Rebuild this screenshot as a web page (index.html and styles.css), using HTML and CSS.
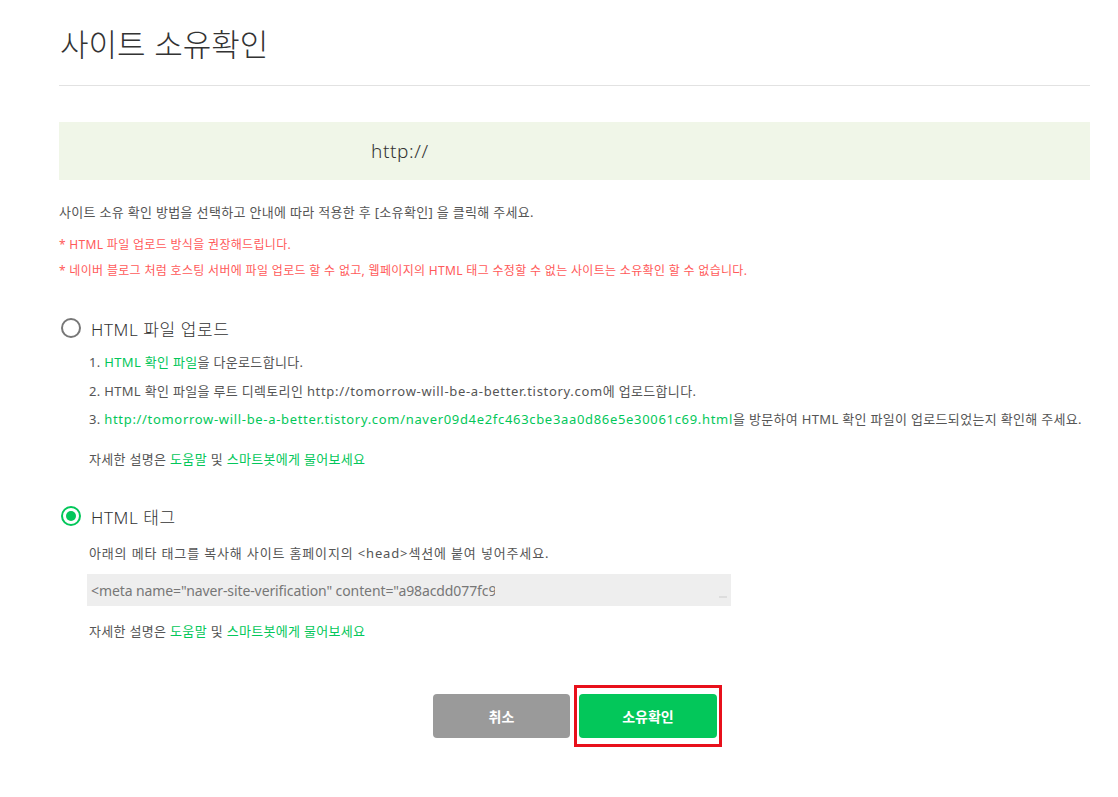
FILE: index.html
```html
<!DOCTYPE html>
<html lang="ko">
<head>
<meta charset="utf-8">
<link rel="stylesheet" href="styles.css">
</head>
<body>
<div class="page">
  <h1 class="title">사이트 소유확인</h1>
  <div class="url-box"><span class="url">http://</span></div>
  <p class="desc">사이트 소유 확인 방법을 선택하고 안내에 따라 적용한 후 [소유확인] 을 클릭해 주세요.</p>
  <p class="warn">* HTML 파일 업로드 방식을 권장해드립니다.</p>
  <p class="warn warn2">* 네이버 블로그 처럼 호스팅 서버에 파일 업로드 할 수 없고, 웹페이지의 HTML 태그 수정할 수 없는 사이트는 소유확인 할 수 없습니다.</p>

  <section class="method">
    <div class="option"><span class="radio"></span><span class="opt-label">HTML 파일 업로드</span></div>
    <div class="body">
      <p class="step">1. <span class="g">HTML 확인 파일</span>을 다운로드합니다.</p>
      <p class="step">2. HTML 확인 파일을 루트 디렉토리인 <span class="en">http://tomorrow-will-be-a-better.tistory.com</span>에 업로드합니다.</p>
      <p class="step">3. <span class="g en">http://tomorrow-will-be-a-better.tistory.com/naver09d4e2fc463cbe3aa0d86e5e30061c69.html</span>을 방문하여 HTML 확인 파일이 업로드되었는지 확인해 주세요.</p>
      <p class="help">자세한 설명은 <span class="g">도움말</span> 및 <span class="g">스마트봇에게 물어보세요</span></p>
    </div>
  </section>

  <section class="method method2">
    <div class="option"><span class="radio on"></span><span class="opt-label">HTML 태그</span></div>
    <div class="body body2">
      <p class="step wide">아래의 메타 태그를 복사해 사이트 홈페이지의 &lt;head&gt;섹션에 붙여 넣어주세요.</p>
      <div class="code"><span class="code-text">&lt;meta name="naver-site-verification" content="a98acdd077fc9</span><span class="grip"></span></div>
      <p class="help help2">자세한 설명은 <span class="g">도움말</span> 및 <span class="g">스마트봇에게 물어보세요</span></p>
    </div>
  </section>

  <div class="actions">
    <button class="btn cancel">취소</button>
    <div class="highlight"><button class="btn ok">소유확인</button></div>
  </div>
</div>
</body>
</html>
```

FILE: styles.css
```css
html, body {
  margin: 0;
  padding: 0;
  background: #fff;
}
body {
  font-family: "Noto Sans", "Noto Sans CJK KR", sans-serif;
  color: #555;
  letter-spacing: 0.32px;
}
p { margin: 0; }
.page {
  width: 1031px;
  margin-left: 59px;
}
.title {
  margin: 0;
  padding: 21px 0 20px 1px;
  font-family: "Noto Sans CJK KR", sans-serif;
  font-size: 31px;
  font-weight: 300;
  line-height: 44px;
  letter-spacing: 0;
  color: #333;
  border-bottom: 1px solid #e2e2e2;
}
.url-box {
  margin-top: 36px;
  height: 58px;
  background: #f0f6e8;
  display: flex;
  align-items: center;
  padding-left: 312px;
}
.url {
  font-size: 19px;
  font-weight: 300;
  color: #333;
  letter-spacing: 0.6px;
}
.desc {
  margin-top: 22px;
  font-size: 13px;
  line-height: 20px;
  color: #555;
}
.warn {
  margin-top: 13px;
  font-size: 12px;
  line-height: 20px;
  color: #ff5a5a;
}
.warn2 { margin-top: 6px; }
.method { margin-top: 35px; }
.method2 { margin-top: 35px; }
.option {
  display: flex;
  align-items: center;
  height: 24px;
}
.radio {
  width: 16px;
  height: 16px;
  border: 2px solid #777;
  border-radius: 50%;
  margin-left: 2px;
  position: relative;
  flex: none;
}
.radio.on { border-color: #03c75a; }
.radio.on::after {
  content: "";
  position: absolute;
  left: 3px;
  top: 3px;
  width: 10px;
  height: 10px;
  border-radius: 50%;
  background: #03c75a;
}
.opt-label {
  margin-left: 10px;
  font-size: 17px;
  font-weight: 300;
  color: #333;
  letter-spacing: 0.6px;
}
.body {
  padding-left: 30px;
  padding-top: 12px;
}
.body2 { padding-top: 15px; }
.step {
  font-size: 13px;
  line-height: 20px;
  margin-bottom: 8.5px;
}
.wide { letter-spacing: 0.85px; }
.en { letter-spacing: 0.68px; }
.g { color: #03c75a; }
.help {
  margin-top: 20px;
  font-size: 13px;
  line-height: 20px;
}
.code {
  margin-top: 11px;
  margin-left: -2px;
  width: 644px;
  height: 32px;
  background: #eeeeee;
  display: flex;
  align-items: center;
  padding-left: 4px;
  box-sizing: border-box;
  position: relative;
}
.code-text {
  font-size: 14px;
  color: #777;
  width: 404px;
  overflow: hidden;
  white-space: nowrap;
  letter-spacing: -0.1px;
}
.grip {
  position: absolute;
  right: 4px;
  bottom: 8px;
  width: 8px;
  height: 2px;
  background: #ddd;
}
.help2 { margin-top: 15px; }
.actions {
  margin-top: 44px;
  display: flex;
  align-items: center;
  padding-left: 374px;
  gap: 4px;
}
.highlight {
  border: 3px solid #e8101b;
  padding: 6px 2px;
}
.btn {
  width: 138px;
  height: 44px;
  border: 0;
  border-radius: 4px;
  color: #fff;
  font-family: "Noto Sans CJK KR", sans-serif;
  font-size: 14px;
  font-weight: 700;
  letter-spacing: 0;
  padding: 0;
}
.cancel { background: #9a9a9a; width: 137px; }
.ok { background: #03c75a; }
```
